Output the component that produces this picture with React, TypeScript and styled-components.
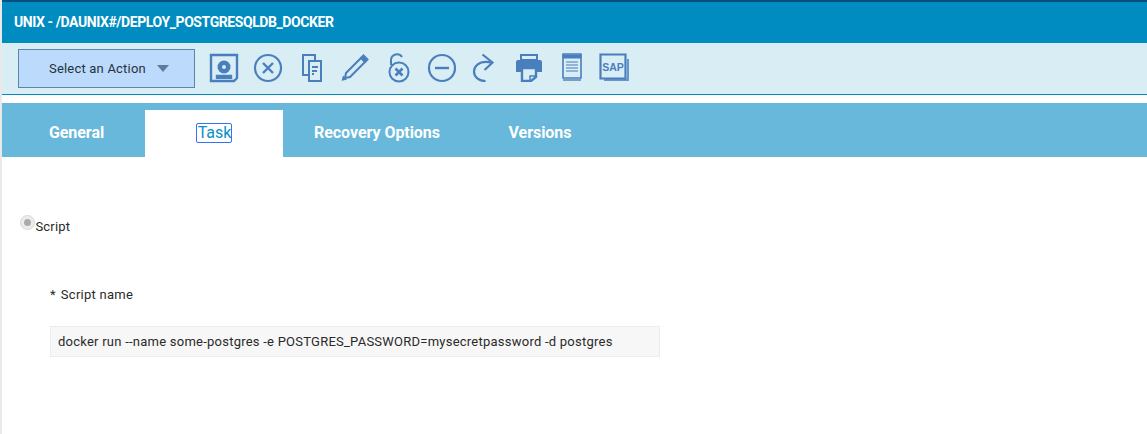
import React from 'react';
import styled, { createGlobalStyle } from 'styled-components';

const GlobalStyle = createGlobalStyle`
  html, body { margin: 0; padding: 0; background: #fff; }
  body { font-family: Roboto, "Liberation Sans", sans-serif; overflow: hidden; }
`;

const Page = styled.div`
  width: 1147px;
  height: 434px;
  box-sizing: border-box;
  border-left: 2px solid #e9e9e9;
  overflow: hidden;
`;

const TitleBar = styled.header`
  height: 41px;
  border-top: 2px solid #04507f;
  margin-left: -2px;
  padding-left: 14px;
  background: #008cc1;
  color: #fff;
  font-size: 14px;
  font-weight: 700;
  letter-spacing: -0.42px;
  line-height: 41px;
`;

const Toolbar = styled.div`
  height: 52px;
  box-sizing: border-box;
  border-bottom: 1px solid #008cc1;
  background: #d9edf5;
  padding: 6px 0 0 16px;
  display: flex;
  align-items: flex-start;
`;

const ActionButton = styled.button`
  width: 177px;
  height: 39px;
  box-sizing: border-box;
  border: 1px solid #5b85ad;
  background: #bbdafc;
  color: #26323c;
  font: 400 13px Roboto, sans-serif;
  letter-spacing: 0.2px;
  padding: 0 0 0 30px;
  display: flex;
  align-items: center;
  gap: 11px;
`;

const Caret = styled.span`
  width: 0;
  height: 0;
  border-left: 6.5px solid transparent;
  border-right: 6.5px solid transparent;
  border-top: 7px solid #5f7c99;
`;

const IconRow = styled.div`
  display: flex;
  margin-left: 6.5px;
  height: 37px;
  align-items: center;
`;

const IconSlot = styled.span<{ $width: number }>`
  width: ${(p) => p.$width}px;
  height: 34px;
  display: flex;
  justify-content: center;
  align-items: center;
  color: #4a7fbd;
  svg { display: block; }
`;

const Tabs = styled.nav`
  margin-top: 8px;
  height: 54px;
  background: #67b8da;
  display: flex;
  align-items: flex-end;
`;

const Tab = styled.a<{ $width: number; $active?: boolean }>`
  width: ${(p) => p.$width}px;
  height: 47px;
  display: flex;
  justify-content: center;
  align-items: center;
  padding-bottom: 2px;
  box-sizing: border-box;
  font-size: 16px;
  letter-spacing: -0.05px;
  font-weight: ${(p) => (p.$active ? 400 : 700)};
  color: ${(p) => (p.$active ? '#0a90c6' : '#fff')};
  background: ${(p) => (p.$active ? '#fff' : 'transparent')};
  &:first-child { padding-left: 6px; }
`;

const FocusLabel = styled.span`
  border: 1.5px solid #3272f5;
  border-radius: 2px;
  padding: 0 0 0 1px;
  line-height: 18px;
`;

const Content = styled.main`
  padding: 58px 0 0 18px;
  color: #2a2a2a;
  font-size: 13px;
`;

const RadioRow = styled.label`
  display: flex;
  align-items: flex-start;
  height: 24px;
  line-height: 24px;
  letter-spacing: 0.15px;
`;

const Radio = styled.span`
  width: 15px;
  height: 15px;
  margin: 0 1px 0 -0.5px;
  border-radius: 50%;
  box-sizing: border-box;
  border: 1px solid #d8d8d8;
  background: #ececec;
  display: flex;
  justify-content: center;
  align-items: center;
  &::after {
    content: '';
    width: 7px;
    height: 7px;
    border-radius: 50%;
    background: #ababab;
  }
`;

const Field = styled.div`
  margin: 47px 0 0 30px;
`;

const FieldLabel = styled.div`
  line-height: 18px;
  height: 18px;
  letter-spacing: 0.25px;
  span { margin-right: 5px; }
`;

const ScriptInput = styled.div`
  margin-top: 22px;
  width: 610px;
  height: 31px;
  box-sizing: border-box;
  border: 1px dotted #d7e6ec;
  background: #f7f7f7;
  padding-left: 7px;
  line-height: 29px;
  letter-spacing: 0.24px;
`;

const iconProps = { fill: 'none', stroke: 'currentColor', strokeWidth: 2 } as const;

const DiskIcon = () => (
  <svg width="30" height="30" viewBox="0 0 30 30" {...iconProps} strokeWidth={2.4}>
    <path d="M2 2h26v23l-3 3H2z" />
    <circle cx="15" cy="14" r="6.500" fill="currentColor" stroke="none" />
    <circle cx="15" cy="14" r="2" fill="#d9edf5" stroke="none" />
    <path d="M8 26v-3h14v3" fill="currentColor" />
  </svg>
);

const CancelIcon = () => (
  <svg width="30" height="30" viewBox="0 0 30 30" {...iconProps} strokeWidth={2.2}>
    <circle cx="15" cy="15" r="13" />
    <path d="M10 10l10 10M20 10L10 20" strokeWidth={2.4} />
  </svg>
);

const CopyIcon = () => (
  <svg width="24" height="30" viewBox="0 0 24 30" {...iconProps}>
    <path d="M8 22H3V2h12v6" />
    <path d="M9 8h12v20H9z" fill="#d9edf5" />
    <path d="M12 14h6M12 18h5M12 21h2" />
  </svg>
);

const PencilIcon = () => (
  <svg width="30" height="30" viewBox="0 0 30 30" {...iconProps}>
    <path d="M6 20L21 5l4 4-15 15-5 1z" />
    <path d="M21.500 4.500l2-2 4 4-2 2z" fill="currentColor" />
    <path d="M3 26.500l2-.5-1.500-1.500z" fill="currentColor" />
  </svg>
);

const UnlockIcon = () => (
  <svg width="24" height="30" viewBox="0 0 24 30" {...iconProps}>
    <path d="M4 12V7a6 6 0 0 1 11-3" />
    <circle cx="12" cy="19" r="9.500" />
    <path d="M8.500 15.500l7 7M15.500 15.500l-7 7" strokeWidth={2.6} />
  </svg>
);

const MinusCircleIcon = () => (
  <svg width="30" height="30" viewBox="0 0 30 30" {...iconProps} strokeWidth={2.2}>
    <circle cx="15" cy="15" r="13" />
    <path d="M8 15h14" strokeWidth={2.4} />
  </svg>
);

const RedoIcon = () => (
  <svg width="24" height="30" viewBox="0 0 24 30" {...iconProps} strokeWidth={2.2}>
    <path d="M19 9.500c-1.500-.4-3-.6-5-.6C7 8.900 2 13 2 18.500 2 24 7 28 13.500 28" />
    <path d="M10.500 1.500L20.500 9.500 12.500 17" />
  </svg>
);

const PrintIcon = () => (
  <svg width="28" height="28" viewBox="0 0 28 28">
    <path d="M6 1h16v5H6z" fill="none" stroke="currentColor" strokeWidth="2" />
    <path d="M3 6h22a2 2 0 0 1 2 2v10h-5v-5H6v5H1V8a2 2 0 0 1 2-2z" fill="currentColor" />
    <path d="M7 14h14v9l-5 4H7z" fill="none" stroke="currentColor" strokeWidth="2.400" />
    <path d="M15 27v-5h6" fill="none" stroke="currentColor" strokeWidth="1.500" />
  </svg>
);

const DocumentIcon = () => (
  <svg width="20" height="30" viewBox="0 0 20 30" fill="none" stroke="currentColor">
    <path d="M1 1h18v24H1z" strokeWidth="1.600" />
    <path d="M1 2h18v3H1z" fill="currentColor" />
    <path d="M4 9h12M4 12h12M4 15h12M4 18h12" strokeWidth="1.200" />
    <path d="M1 27h18" strokeWidth="2" opacity="0.7" />
  </svg>
);

const SapIcon = () => (
  <svg width="30" height="30" viewBox="0 0 30 30">
    <path d="M5 27h24V6" fill="none" stroke="currentColor" strokeWidth="2" opacity="0.8" />
    <path d="M1.500 1.500h25v24h-25z" fill="#d9edf5" stroke="currentColor" strokeWidth="2.200" />
    <text x="14" y="17.500" textAnchor="middle" fontFamily="Liberation Sans, sans-serif" fontSize="10.500" fontWeight="700" fill="currentColor">SAP</text>
  </svg>
);

const toolIcons = [
  { Icon: DiskIcon, width: 44 },
  { Icon: CancelIcon, width: 44 },
  { Icon: CopyIcon, width: 45 },
  { Icon: PencilIcon, width: 41 },
  { Icon: UnlockIcon, width: 47 },
  { Icon: MinusCircleIcon, width: 38 },
  { Icon: RedoIcon, width: 47 },
  { Icon: PrintIcon, width: 42 },
  { Icon: DocumentIcon, width: 44 },
  { Icon: SapIcon, width: 41 },
];

export default function App() {
  return (
    <Page>
      <GlobalStyle />
      <TitleBar>UNIX - /DAUNIX#/DEPLOY_POSTGRESQLDB_DOCKER</TitleBar>
      <Toolbar>
        <ActionButton>
          Select an Action
          <Caret />
        </ActionButton>
        <IconRow>
          {toolIcons.map(({ Icon, width }, i) => (
            <IconSlot key={i} $width={width}>
              <Icon />
            </IconSlot>
          ))}
        </IconRow>
      </Toolbar>
      <Tabs>
        <Tab $width={143}>General</Tab>
        <Tab $width={138} $active>
          <FocusLabel>Task</FocusLabel>
        </Tab>
        <Tab $width={188}>Recovery Options</Tab>
        <Tab $width={138}>Versions</Tab>
      </Tabs>
      <Content>
        <RadioRow>
          <Radio />
          Script
        </RadioRow>
        <Field>
          <FieldLabel>
            <span>*</span>Script name
          </FieldLabel>
          <ScriptInput>docker run --name some-postgres -e POSTGRES_PASSWORD=mysecretpassword -d postgres</ScriptInput>
        </Field>
      </Content>
    </Page>
  );
}
